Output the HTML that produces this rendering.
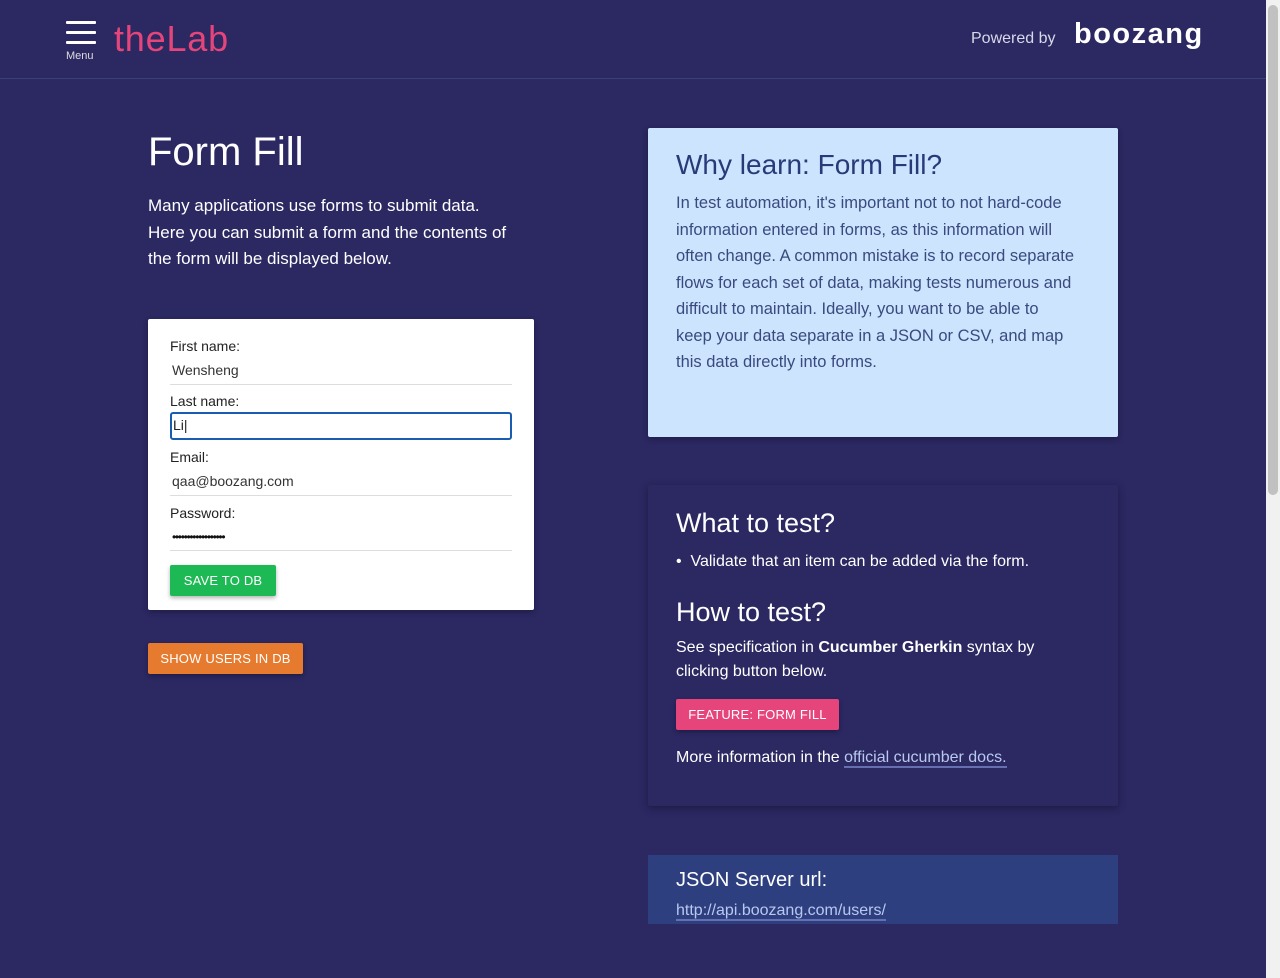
<!DOCTYPE html>
<html><head><meta charset="utf-8"><style>
*{box-sizing:border-box;margin:0;padding:0}
body{width:1280px;height:978px;background:#2b2862;font-family:"Liberation Sans",sans-serif;color:#fff;position:relative;overflow:hidden}
.a{position:absolute}
.hdr{left:0;top:0;width:1266px;height:79px;border-bottom:1px solid #3d3f7a}
.bar{position:absolute;left:66px;width:30px;height:3px;background:#fff;border-radius:1px}
.sb{left:1266px;top:0;width:14px;height:978px;background:#f1f1f1}
.thumb{left:1268px;top:5px;width:10px;height:490px;background:#c1c1c1;border-radius:5px}
.card{background:#fff;border-radius:2px;box-shadow:0 2px 6px rgba(0,0,0,.3)}
.lbl{font-size:14px;color:#222;position:absolute;left:22px}
.inp{position:absolute;left:22px;width:342px;height:27px;border-bottom:1px solid #ddd;font-size:14px;color:#333;padding:4px 2px}
.btn{position:absolute;font-size:13px;color:#fff;text-align:center;border-radius:2px;box-shadow:0 2px 4px rgba(0,0,0,.3);letter-spacing:.2px}
p.t{font-size:17px;line-height:26.5px}
</style></head><body>
<div class="a hdr"></div>
<div class="bar" style="top:21px"></div><div class="bar" style="top:31px"></div><div class="bar" style="top:41px"></div>
<div class="a" style="left:66px;top:50px;font-size:11px;color:#ddd">Menu</div>
<div class="a" style="left:114px;top:18px;font-size:36px;color:#e5457a;letter-spacing:.8px">theLab</div>
<div class="a" style="left:971px;top:30px;font-size:16px;color:#d8d8e8">Powered by</div>
<div class="a" style="left:1074px;top:18px;font-size:29px;font-weight:bold;letter-spacing:1.5px">boozang</div>

<div class="a" style="left:148px;top:130px;font-size:40px">Form Fill</div>
<p class="a t" style="left:148px;top:193px;width:372px">Many applications use forms to submit data. Here you can submit a form and the contents of the form will be displayed below.</p>

<div class="a card" style="left:148px;top:319px;width:386px;height:291px">
<div class="lbl" style="top:19px">First name:</div>
<div class="inp" style="top:39px">Wensheng</div>
<div class="lbl" style="top:74px">Last name:</div>
<div class="inp" style="top:93px;height:28px;border:2px solid #1a5cb0;border-radius:3px;padding:3px 1px;color:#222">Li|</div>
<div class="lbl" style="top:130px">Email:</div>
<div class="inp" style="top:150px">qaa@boozang.com</div>
<div class="lbl" style="top:186px">Password:</div>
<div class="inp" style="top:205px;height:27px;font-size:12px;letter-spacing:-1.3px;padding-top:6px;color:#111">••••••••••••••••••</div>
<div class="btn" style="left:22px;top:246px;width:106px;height:31px;line-height:31px;background:#1db954">SAVE TO DB</div>
</div>
<div class="btn" style="left:148px;top:643px;width:155px;height:31px;line-height:31px;background:#e67a2e">SHOW USERS IN DB</div>

<div class="a card" style="left:648px;top:128px;width:470px;height:309px;background:#cce4fd;padding:21px 28px">
<div style="font-size:28px;color:#283a78">Why learn: Form Fill?</div>
<p class="t" style="color:#3a4a80;margin-top:9px;font-size:16.5px;width:400px">In test automation, it's important not to not hard-code information entered in forms, as this information will often change. A common mistake is to record separate flows for each set of data, making tests numerous and difficult to maintain. Ideally, you want to be able to keep your data separate in a JSON or CSV, and map this data directly into forms.</p>
</div>

<div class="a" style="left:648px;top:485px;width:470px;height:321px;background:#2b2862;box-shadow:0 2px 8px rgba(0,0,0,.35);border-radius:2px;padding:23px 28px">
<div style="font-size:27px">What to test?</div>
<div style="font-size:16px;margin-top:14px">&bull;&nbsp; Validate that an item can be added via the form.</div>
<div style="font-size:27px;margin-top:26px">How to test?</div>
<p style="font-size:16px;line-height:24px;margin-top:8px">See specification in <b>Cucumber Gherkin</b> syntax by clicking button below.</p>
</div>
<div class="btn" style="left:676px;top:699px;width:163px;height:31px;line-height:31px;background:#e5457a">FEATURE: FORM FILL</div>
<div class="a" style="left:676px;top:749px;font-size:16px">More information in the <span style="color:#b8c8f0;border-bottom:2px solid #6670b0">official cucumber docs.</span></div>

<div class="a" style="left:648px;top:855px;width:470px;height:69px;background:#2e3f7f;padding:14px 28px;overflow:hidden">
<div style="font-size:20px">JSON Server url:</div>
<div style="font-size:16px;margin-top:10px;color:#b8c8f0"><span style="border-bottom:2px solid #6670b0">http://api.boozang.com/users/</span></div>
</div>

<div class="a sb"></div><div class="a thumb"></div>
</body></html>
